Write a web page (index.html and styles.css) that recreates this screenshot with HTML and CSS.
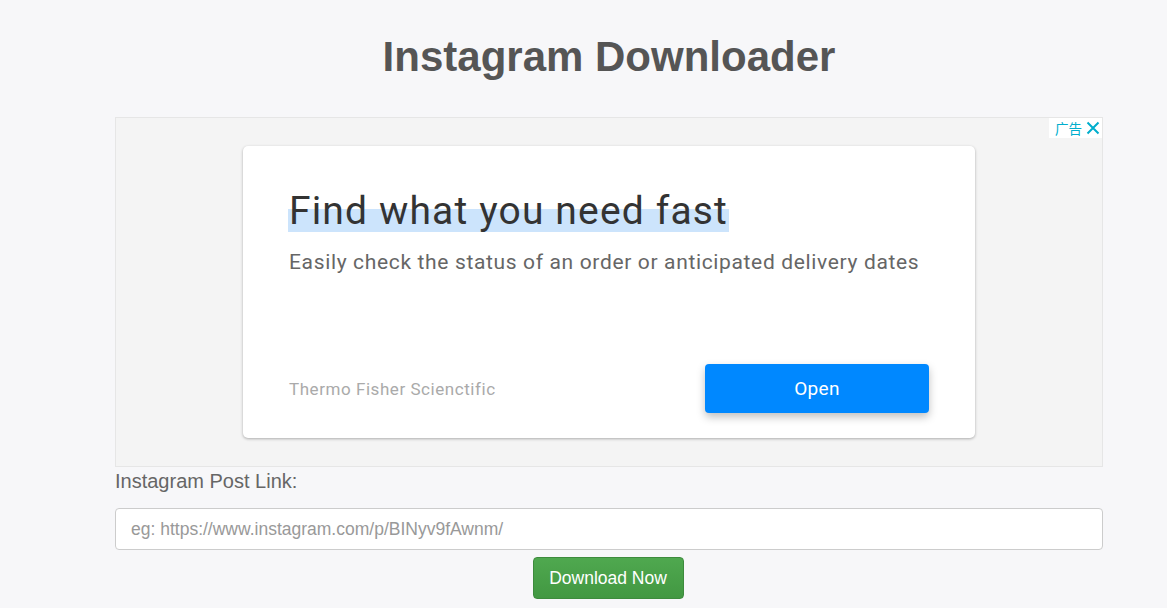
FILE: index.html
```html
<!DOCTYPE html>
<html>
<head>
<meta charset="utf-8">
<title>Instagram Downloader</title>
<link rel="stylesheet" href="styles.css">
</head>
<body>
<div class="container">
  <h1 class="title">Instagram Downloader</h1>
  <div class="ad">
    <div class="ad-badge"><span class="ad-label">广告</span><svg class="ad-close" width="14" height="14" viewBox="0 0 14 14"><path d="M1.5 1.5L12.5 12.5M12.5 1.5L1.5 12.5" stroke="#00aecd" stroke-width="2" fill="none"/></svg></div>
    <div class="ad-card">
      <div class="ad-head"><span class="ad-hl">Find what you need fast</span></div>
      <div class="ad-sub">Easily check the status of an order or anticipated delivery dates</div>
      <div class="ad-foot">
        <span class="ad-brand">Thermo Fisher Scienctific</span>
        <span class="ad-btn">Open</span>
      </div>
    </div>
  </div>
  <label class="label">Instagram Post Link:</label>
  <input class="input" type="text" placeholder="eg: https://www.instagram.com/p/BINyv9fAwnm/">
  <div class="actions"><button class="dl-btn">Download Now</button></div>
</div>
</body>
</html>
```
FILE: styles.css
```css
html, body { margin: 0; padding: 0; }
body {
  background: #f7f7f9;
  font-family: "Liberation Sans", Arial, sans-serif;
  color: #555;
}
.container {
  width: 988px;
  margin-left: 115px;
  display: flex;
  flex-direction: column;
}
.title {
  margin: 33px 0 0;
  height: 84px;
  font-size: 42px;
  line-height: 48px;
  font-weight: bold;
  text-align: center;
  color: #555;
}
.ad {
  position: relative;
  height: 350px;
  background: #f4f4f4;
  border: 1px solid #e6e6e6;
  padding: 28px 0 0 127px;
  box-sizing: border-box;
}
.ad-badge {
  position: absolute;
  top: 0;
  right: 0;
  height: 20px;
  display: flex;
  align-items: center;
  gap: 4px;
  padding: 0 2px 0 6px;
  background: #fff;
}
.ad-label {
  font-family: "Noto Sans CJK SC", sans-serif;
  font-size: 13.5px;
  color: #00aecd;
  line-height: 20px;
}
.ad-close { display: block; }
.ad-card {
  width: 732px;
  height: 292px;
  background: #fff;
  border-radius: 5px;
  box-shadow: 0 1px 3px rgba(0,0,0,0.3);
  box-sizing: border-box;
  padding: 40px 0 0 46px;
  display: flex;
  flex-direction: column;
  font-family: Roboto, "Open Sans", sans-serif;
}
.ad-head {
  font-size: 39px;
  line-height: 50px;
  letter-spacing: 1.15px;
  color: #333;
}
.ad-hl {
  background: linear-gradient(to bottom, transparent 0, transparent 21px, #cce4fc 21px, #cce4fc 44px, transparent 44px);
  margin-left: -1px;
  padding: 0 1px 0 1px;
}
.ad-sub {
  margin-top: 12px;
  font-size: 21px;
  line-height: 28px;
  letter-spacing: 0.65px;
  color: #666;
}
.ad-foot {
  margin-top: auto;
  margin-bottom: 25px;
  display: flex;
  align-items: center;
  justify-content: space-between;
  padding-right: 46px;
}
.ad-brand {
  font-size: 17px;
  letter-spacing: 0.55px;
  color: #aaa;
}
.ad-btn {
  width: 224px;
  height: 49px;
  background: #0088ff;
  border-radius: 4px;
  color: #fff;
  font-size: 19px;
  letter-spacing: 0.3px;
  display: flex;
  align-items: center;
  justify-content: center;
  box-shadow: 0 4px 8px rgba(0,0,0,0.25);
}
.label {
  margin-top: 2px;
  font-size: 20px;
  line-height: 24px;
  color: #666;
}
.input {
  margin-top: 15px;
  height: 42px;
  box-sizing: border-box;
  border: 1px solid #ccc;
  border-radius: 4px;
  background: #fff;
  padding: 0 15px;
  font-family: "Liberation Sans", Arial, sans-serif;
  font-size: 17.5px;
  color: #555;
}
.input::placeholder { color: #999; }
.actions {
  display: flex;
  justify-content: center;
  margin-top: 7px;
  padding-right: 2px;
}
.dl-btn {
  width: 151px;
  height: 42px;
  border: 1px solid #3d8b3d;
  border-radius: 4px;
  background: linear-gradient(to bottom, #4fa84f, #429842);
  color: #fff;
  font-family: "Liberation Sans", Arial, sans-serif;
  font-size: 17.5px;
  padding: 0;
}
```
